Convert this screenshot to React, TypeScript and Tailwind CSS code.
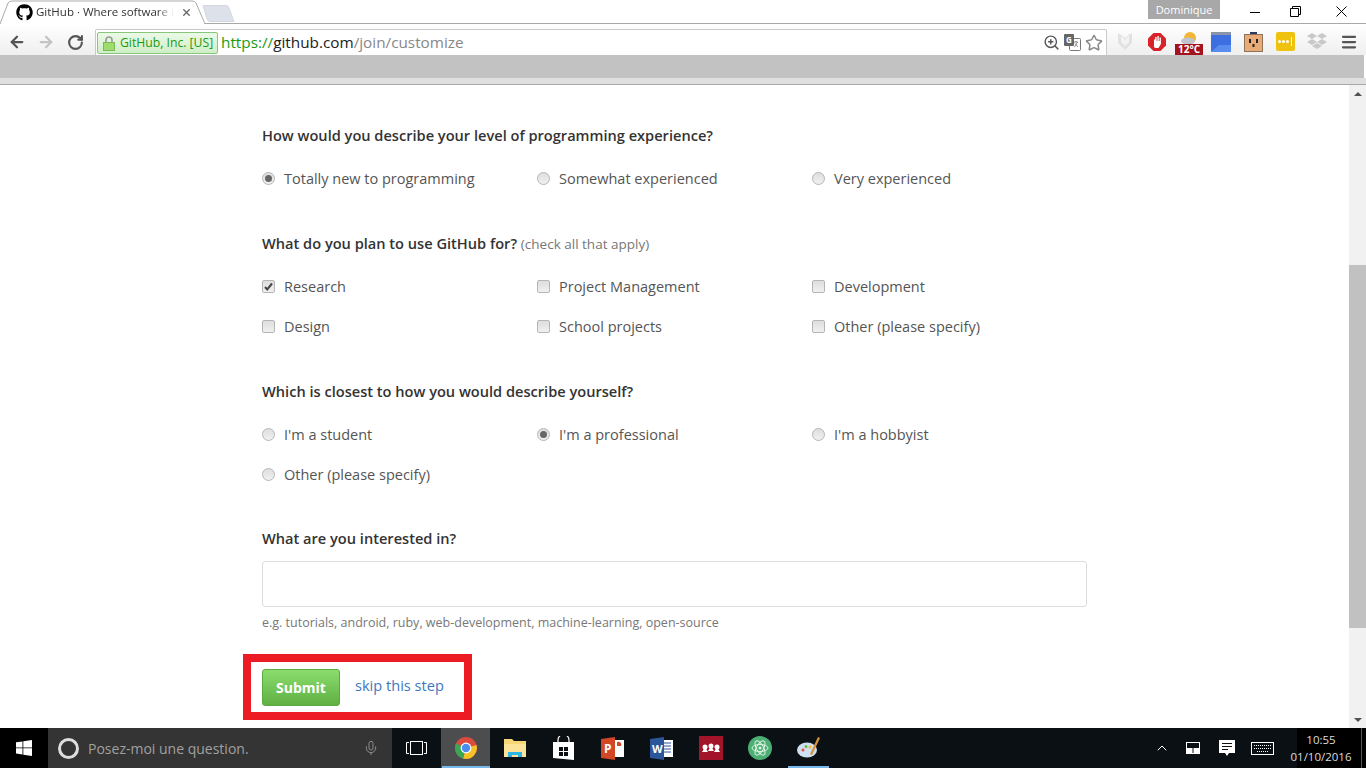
import React from "react";
import { FaGithub } from "react-icons/fa";
import { ArrowLeft, ArrowRight, RotateCw, ZoomIn, Star, Mic, ChevronUp, X, Menu } from "lucide-react";

const sans = { fontFamily: '"Open Sans", "Noto Sans", sans-serif' };

function Radio({ on }: { on?: boolean }) {
  return (
    <span className="w-[13px] h-[13px] -mt-[2px] rounded-full border border-[#b5b5b5] bg-gradient-to-b from-[#dedede] to-[#f0f0f0] flex items-center justify-center shrink-0">
      {on && <span className="w-[7px] h-[7px] rounded-full bg-[#666]" />}
    </span>
  );
}

function Check({ on }: { on?: boolean }) {
  return (
    <span className="w-[13px] h-[13px] -mt-[2px] rounded-[2px] border border-[#b5b5b5] bg-gradient-to-b from-[#dedede] to-[#f0f0f0] flex items-center justify-center shrink-0">
      {on && (
        <svg width="11" height="11" viewBox="0 0 11 11">
          <path d="M2 6l2.2 2.4L9 2.5" fill="none" stroke="#444" strokeWidth="2" />
        </svg>
      )}
    </span>
  );
}

function Opt({ kind, on, label }: { kind: "r" | "c"; on?: boolean; label: string }) {
  return (
    <div className="flex items-center gap-[9px] h-[40px] text-[14.5px] text-[#555]">
      {kind === "r" ? <Radio on={on} /> : <Check on={on} />}
      <span>{label}</span>
    </div>
  );
}

function Heading({ children }: { children: React.ReactNode }) {
  return <div className="h-[24px] leading-[22px] text-[14.6px] font-semibold text-[#333]">{children}</div>;
}

function Ext({ children }: { children: React.ReactNode }) {
  return <div className="w-[32px] h-[28px] flex items-center justify-center shrink-0">{children}</div>;
}

function Chrome() {
  return (
    <svg width="24" height="24" viewBox="0 0 24 24">
      <circle cx="12" cy="12" r="11" fill="#dd4b3e" />
      <path d="M12 12L22.5 9A11 11 0 0 1 9 22.6z" fill="#f5c228" />
      <path d="M12 12L9 22.6A11 11 0 0 1 2 7.5z" fill="#3aa757" />
      <circle cx="12" cy="12" r="5.4" fill="#fff" />
      <circle cx="12" cy="12" r="4.2" fill="#4a8cf0" />
    </svg>
  );
}

function Task({ children, active, line, narrow }: { children: React.ReactNode; active?: boolean; line?: boolean; narrow?: boolean }) {
  return (
    <div className={`w-[49px] h-full flex items-center justify-center shrink-0 relative ${active ? "bg-[#4b4d4e]" : ""}`}>
      {children}
      {line && <span className={`absolute bottom-0 h-[2px] bg-[#76b9ed] ${narrow ? "left-[4px] right-[4px]" : "left-[1px] right-0"}`} />}
    </div>
  );
}

export default function App() {
  return (
    <div className="w-[1366px] h-[768px] overflow-hidden flex flex-col bg-white" style={sans}>
      {/* tab strip */}
      <div className="h-[24px] relative flex shrink-0 bg-white border-b border-[#a9a9a9]">
        <svg className="absolute left-0 top-0" width="206" height="25" viewBox="0 0 206 25">
          <path d="M0 24 L8 3 Q9 1 12 1 L192 1 Q195 1 196 3 L205 24" fill="#fff" stroke="#a9a9a9" />
          <path d="M0 24.5 H205" stroke="#fff" />
        </svg>
        <div className="relative flex items-center h-[24px] pl-[16px] w-[200px] text-[11.5px] text-[#333]">
          <FaGithub className="w-[17px] h-[17px] text-black shrink-0" />
          <span className="ml-[3px] w-[138px] overflow-hidden whitespace-nowrap [mask-image:linear-gradient(to_right,black_88%,transparent)]">GitHub · Where software is</span>
          <X className="w-[11px] h-[11px] ml-[7px] text-[#666]" strokeWidth={3} />
        </div>
        <svg className="relative mt-[5px] ml-[2px]" width="33" height="17" viewBox="0 0 33 17">
          <path d="M1 0.5H24Q26 0.5 27 3L32 16.5H8Q6 16.5 5 14z" fill="#dde2ea" stroke="#d3d7de" />
        </svg>
        <div className="flex-1" />
        <div className="w-[72px] h-[19px] bg-[#a8a8a8] text-white text-[11px] leading-[19px] text-center mr-[13px]">Dominique</div>
        <div className="w-[44px] h-[19px] flex items-center justify-center">
          <span className="w-[10px] h-[1px] bg-black mt-[5px]" />
        </div>
        <div className="w-[36px] h-[19px] flex items-center justify-center mt-[2px]">
          <svg width="11" height="11" viewBox="0 0 11 11">
            <path d="M0.5 2.5h8v8h-8zM2.5 2.5v-2h8v8h-2" fill="none" stroke="#000" />
          </svg>
        </div>
        <div className="w-[53px] h-[19px] flex items-center justify-center mt-[2px] pl-[3px]">
          <svg width="11" height="11" viewBox="0 0 11 11">
            <path d="M0.5 0.5l10 10M10.5 0.5l-10 10" stroke="#000" />
          </svg>
        </div>
      </div>

      {/* toolbar */}
      <div className="h-[31px] shrink-0 flex items-end bg-gradient-to-b from-white to-[#efefef]">
        <div className="w-[95px] h-full flex items-center shrink-0 pl-[8px] pt-[5px] gap-[11px]">
          <ArrowLeft className="w-[18px] h-[18px] text-[#555]" strokeWidth={3} />
          <ArrowRight className="w-[18px] h-[18px] text-[#c4c4c4]" strokeWidth={3} />
          <RotateCw className="w-[17px] h-[17px] ml-[1px] text-[#555]" strokeWidth={3} />
        </div>
        <div className="w-[1012px] h-[26px] bg-white border border-b-0 border-[#c9c9c9] rounded-t-[2px] flex items-center pl-[1px]">
          <div className="h-[22px] w-[121px] mt-[1px] flex items-center shrink-0 rounded-[2px] border border-[#86c77a] bg-gradient-to-b from-[#ecf9e7] to-[#cfeec6] text-[#1a9b12] text-[12.2px]">
            <svg className="ml-[5px]" width="12" height="15" viewBox="0 0 12 15">
              <path d="M3 7V4a3 3 0 0 1 6 0v3" fill="none" stroke="#9a9a9a" strokeWidth="1.6" />
              <rect x="0.5" y="6.5" width="11" height="8" fill="#9fdc6e" stroke="#7fb85a" />
            </svg>
            <span className="ml-[5px] whitespace-nowrap">GitHub, Inc. [US]</span>
          </div>
          <div className="ml-[3px] text-[15.3px] whitespace-nowrap flex-1">
            <span className="text-[#1a9b12]">https://</span>
            <span className="text-[#222]">github.com</span>
            <span className="text-[#888]">/join/customize</span>
          </div>
          <div className="flex items-center gap-[4px] pr-[3px]">
            <ZoomIn className="w-[17px] h-[17px] text-[#555]" />
            <svg width="17" height="17" viewBox="0 0 17 17">
              <rect x="5.5" y="4.5" width="11" height="12" rx="1" fill="#fff" stroke="#777" />
              <path d="M10 8h4M12 7v1M10.500 13l3-5M11 9.500l3 3.500" fill="none" stroke="#777" strokeWidth="0.8" />
              <rect x="0" y="0" width="10" height="12" rx="1" fill="#666" />
              <text x="2" y="9" fontSize="8" fontWeight="700" fill="#fff">G</text>
            </svg>
            <Star className="w-[18px] h-[18px] text-[#888]" />
          </div>
        </div>
        <div className="flex-1 h-full flex items-center pl-[2px] pt-[4px]">
          <Ext>
            <svg width="14" height="19" viewBox="0 0 14 19">
              <path d="M0 1l3.5 2L7 6l3.5-3L14 1v10l-7 7-7-7z" fill="#e2e2e2" />
              <path d="M3 3.500V10l4 4 4-4V3.500L7 8z" fill="#f3f3f3" />
            </svg>
          </Ext>
          <Ext>
            <svg width="18" height="18" viewBox="0 0 18 18">
              <path d="M5.5 0h7L18 5.5v7L12.5 18h-7L0 12.5v-7z" fill="#d9232a" />
              <path d="M6 14V6.5h1.2V4h1.4v4h0.8V3h1.4v5h0.8V4.500h1.300v6.500L10.500 15H7z" fill="#fff" />
            </svg>
          </Ext>
          <Ext>
            <div className="relative w-[28px] h-[24px] mt-[2px]">
              <svg className="absolute left-[5px] top-0" width="18" height="14" viewBox="0 0 18 14">
                <circle cx="10" cy="7" r="6" fill="#f2b632" />
                <ellipse cx="8" cy="10" rx="7" ry="3.500" fill="#bfc4cc" />
              </svg>
              <span className="absolute left-0 bottom-0 w-[28px] h-[11px] bg-[#a5121e] text-white text-[10px] font-bold leading-[11px] text-center">12°C</span>
            </div>
          </Ext>
          <Ext>
            <svg width="20" height="20" viewBox="0 0 20 20">
              <rect x="0" y="0" width="20" height="20" rx="1" fill="#3d6fe0" />
              <rect x="0" y="0" width="20" height="3" fill="#8a94a8" />
              <path d="M0 20l8-7h12v7z" fill="#5a8cf0" />
            </svg>
          </Ext>
          <Ext>
            <svg width="19" height="20" viewBox="0 0 19 20">
              <rect x="6" y="0" width="7" height="4" fill="#2b3a63" />
              <rect x="0.500" y="2.500" width="18" height="17" fill="#e8ab78" stroke="#8c7358" />
              <rect x="5" y="7" width="2" height="4" fill="#222" />
              <rect x="12" y="7" width="2" height="4" fill="#222" />
              <rect x="8.500" y="12" width="2" height="3" fill="#222" />
            </svg>
          </Ext>
          <Ext>
            <div className="w-[19px] h-[19px] rounded-[2px] bg-[#efc20f] flex items-center justify-center gap-[1px]">
              <span className="w-[3px] h-[3px] rounded-full bg-white" />
              <span className="w-[3px] h-[3px] rounded-full bg-white" />
              <span className="w-[3px] h-[3px] rounded-full bg-white" />
              <span className="w-[1px] h-[9px] ml-[1px] bg-white" />
            </div>
          </Ext>
          <Ext>
            <svg width="20" height="19" viewBox="0 0 20 19">
              <path d="M5 1l5 3-5 3-5-3zM15 1l5 3-5 3-5-3zM5 7l5 3-5 3-5-3zM15 7l5 3-5 3-5-3zM10 11l5 3-5 3-5-3z" fill="#c9c9c9" />
            </svg>
          </Ext>
          <Ext>
            <Menu className="w-[18px] h-[18px] text-[#555]" strokeWidth={3} />
          </Ext>
        </div>
      </div>

      {/* grey bars */}
      <div className="h-[23px] shrink-0 bg-[#c2c2c2] mr-[2px]" />
      <div className="h-[7px] shrink-0 bg-[#dfdfdf] border-b border-[#a9a9a9]" />

      {/* page */}
      <div className="flex-1 min-h-0 flex">
        <div className="flex-1 pl-[262px] pt-[39px]">
          <div className="w-[825px]">
            <Heading>How would you describe your level of programming experience?</Heading>
            <div className="grid grid-cols-[275px_275px_275px] mt-[11px]">
              <Opt kind="r" on label="Totally new to programming" />
              <Opt kind="r" label="Somewhat experienced" />
              <Opt kind="r" label="Very experienced" />
            </div>
            <div className="mt-[33px]">
              <Heading>
                What do you plan to use GitHub for?{" "}
                <span className="font-normal text-[13.5px] text-[#777]">(check all that apply)</span>
              </Heading>
            </div>
            <div className="grid grid-cols-[275px_275px_275px] mt-[11px]">
              <Opt kind="c" on label="Research" />
              <Opt kind="c" label="Project Management" />
              <Opt kind="c" label="Development" />
              <Opt kind="c" label="Design" />
              <Opt kind="c" label="School projects" />
              <Opt kind="c" label="Other (please specify)" />
            </div>
            <div className="mt-[33px]">
              <Heading>Which is closest to how you would describe yourself?</Heading>
            </div>
            <div className="grid grid-cols-[275px_275px_275px] mt-[11px]">
              <Opt kind="r" label="I'm a student" />
              <Opt kind="r" on label="I'm a professional" />
              <Opt kind="r" label="I'm a hobbyist" />
              <Opt kind="r" label="Other (please specify)" />
            </div>
            <div className="mt-[32px]">
              <Heading>What are you interested in?</Heading>
            </div>
            <div className="mt-[10px] h-[46px] rounded-[3px] border border-[#ddd] bg-white" />
            <div className="mt-[6px] h-[20px] leading-[20px] text-[12.5px] text-[#777]">
              e.g. tutorials, android, ruby, web-development, machine-learning, open-source
            </div>
            <div className="mt-[21px] -ml-[19px] w-[229px] h-[66px] border-[8px] border-[#ed1c24] flex items-center pl-[11px]">
              <button className="w-[78px] h-[37px] rounded-[3px] border border-[#5ca941] bg-gradient-to-b from-[#8add6d] to-[#60b044] text-white font-bold text-[14px] mt-[1px]">
                Submit
              </button>
              <span className="ml-[15px] text-[14.6px] text-[#4078c0] -mt-[2px]">skip this step</span>
            </div>
          </div>
        </div>
        <div className="w-[17px] shrink-0 bg-[#f1f1f1] flex flex-col items-center">
          <div className="h-[17px] flex items-center justify-center">
            <span className="w-0 h-0 border-x-[4px] border-x-transparent border-b-[4px] border-b-[#505050]" />
          </div>
          <div className="h-[163px]" />
          <div className="w-full h-[363px] bg-[#c1c1c1]" />
          <div className="flex-1" />
          <div className="h-[17px] flex items-center justify-center">
            <span className="w-0 h-0 border-x-[4px] border-x-transparent border-t-[4px] border-t-[#505050]" />
          </div>
        </div>
      </div>

      {/* taskbar */}
      <div className="h-[40px] shrink-0 bg-[#0b1014] flex text-white">
        <div className="w-[48px] h-full bg-black flex items-center justify-center shrink-0">
          <svg width="16" height="16" viewBox="0 0 16 16">
            <path d="M0 2.300L6.500 1.400V7.500H0zM7.300 1.300L16 0V7.500H7.300zM0 8.300H6.500V14.500L0 13.600zM7.300 8.300H16V16L7.300 14.700z" fill="#fff" />
          </svg>
        </div>
        <div className="w-[344px] h-full bg-[#343434] flex items-center shrink-0 pl-[10px]">
          <span className="w-[21px] h-[21px] rounded-full border-[3px] border-[#ddd]" />
          <span className="ml-[9px] text-[14px] text-[#a0a0a0] flex-1">Posez-moi une question.</span>
          <Mic className="w-[16px] h-[16px] text-[#999] mr-[13px]" strokeWidth={1.3} />
        </div>
        <div className="w-[49px] h-full flex items-center justify-center shrink-0">
          <svg width="21" height="14" viewBox="0 0 21 14">
            <path d="M3 1.500H0.500v11H3M18 1.500h2.500v11H18" fill="none" stroke="#fff" />
            <rect x="4.500" y="0.500" width="12" height="13" fill="none" stroke="#fff" />
          </svg>
        </div>
        <Task active line><Chrome /></Task>
        <Task>
          <svg width="22" height="18" viewBox="0 0 22 18">
            <path d="M0 0h8l2 2h12v16H0z" fill="#f7d774" />
            <rect x="0" y="5" width="22" height="13" fill="#fbe49a" />
            <path d="M4 18v-5h14v5h-4v-2H8v2z" fill="#2bb6e8" />
          </svg>
        </Task>
        <Task>
          <svg width="21" height="24" viewBox="0 0 21 24">
            <path d="M5 6V4a5 5 0 0 1 11 0v2" fill="none" stroke="#fff" strokeWidth="1.200" />
            <path d="M0 6h21v18l-21-2z" fill="#fff" />
            <path d="M6 11h4v4H6zM11 11h4v4h-4zM6 16h4v4H6zM11 16h4v4h-4z" fill="#0b1014" />
          </svg>
        </Task>
        <Task>
          <svg width="23" height="23" viewBox="0 0 23 23">
            <path d="M10 3h13v17H10z" fill="#fff" />
            <path d="M0 2l14-2v23L0 21z" fill="#d24726" />
            <path d="M16 5a3 3 0 0 1 4 4h-4z" fill="#d24726" />
            <text x="3" y="16" fontSize="12" fontWeight="700" fill="#fff">P</text>
          </svg>
        </Task>
        <Task>
          <svg width="23" height="23" viewBox="0 0 23 23">
            <rect x="10" y="3" width="13" height="17" fill="#fff" />
            <path d="M14 6h7M14 9h7M14 12h7M14 15h7" stroke="#2b579a" />
            <path d="M0 2l14-2v23L0 21z" fill="#2b579a" />
            <text x="2" y="16" fontSize="11" fontWeight="700" fill="#fff">W</text>
          </svg>
        </Task>
        <Task>
          <svg width="24" height="24" viewBox="0 0 24 24">
            <rect width="24" height="24" fill="#a31329" />
            <circle cx="12" cy="10" r="2.500" fill="#fff" />
            <circle cx="6" cy="11" r="2.500" fill="#fff" />
            <circle cx="18" cy="11" r="2.500" fill="#fff" />
            <path d="M3 16l3-5 3 5zM9 15l3-5 3 5zM15 16l3-5 3 5z" fill="#fff" />
          </svg>
        </Task>
        <Task>
          <svg width="24" height="24" viewBox="0 0 24 24">
            <circle cx="12" cy="12" r="12" fill="#4cae72" />
            <g fill="none" stroke="#dff5e4" strokeWidth="1">
              <ellipse cx="12" cy="12" rx="8" ry="3.500" />
              <ellipse cx="12" cy="12" rx="8" ry="3.500" transform="rotate(60 12 12)" />
              <ellipse cx="12" cy="12" rx="8" ry="3.500" transform="rotate(120 12 12)" />
            </g>
            <circle cx="12" cy="12" r="1.500" fill="#dff5e4" />
          </svg>
        </Task>
        <Task line narrow>
          <svg width="24" height="24" viewBox="0 0 24 24">
            <ellipse cx="10" cy="14" rx="10" ry="7.500" fill="#cfdff2" />
            <circle cx="6" cy="14" r="1.500" fill="#e8503a" />
            <circle cx="9" cy="10.500" r="1.500" fill="#6cbb45" />
            <circle cx="13" cy="11" r="1.500" fill="#f0c030" />
            <path d="M21 1l2 1-8 17-2-1z" fill="#d8913c" />
          </svg>
        </Task>
        <div className="flex-1" />
        <div className="flex items-center h-full shrink-0">
          <ChevronUp className="w-[16px] h-[16px] mr-[16px]" strokeWidth={1.500} />
          <svg className="mr-[19px]" width="14" height="12" viewBox="0 0 14 12">
            <rect x="0.500" y="0.500" width="13" height="11" fill="none" stroke="#fff" />
            <rect x="1" y="6" width="5.500" height="5" fill="#fff" />
            <rect x="7.500" y="6" width="5.500" height="5" fill="#fff" />
          </svg>
          <svg className="mr-[16px]" width="16" height="16" viewBox="0 0 16 16">
            <path d="M0 0h16v13h-6l-2 3-2-3H0z" fill="#fff" />
            <path d="M3 3.500h10M3 6.500h10M3 9.500h6" stroke="#0b1014" />
          </svg>
          <svg width="23" height="13" viewBox="0 0 23 13">
            <rect x="0.500" y="0.500" width="22" height="12" fill="none" stroke="#fff" />
            <path d="M3 3.500h17M3 6.500h17M6 9.500h11" stroke="#fff" strokeDasharray="1 1" />
          </svg>
        </div>
        <div className="w-[64px] h-full ml-[23px] bg-black flex flex-col items-center justify-center text-[11.5px] leading-[17px] text-[#ddd] shrink-0 pr-[16px] whitespace-nowrap">
          <span>10:55</span>
          <span>01/10/2016</span>
        </div>
        <div className="w-[1px] h-full bg-[#555] shrink-0" />
        <div className="w-[4px] h-full bg-black shrink-0" />
      </div>
    </div>
  );
}
